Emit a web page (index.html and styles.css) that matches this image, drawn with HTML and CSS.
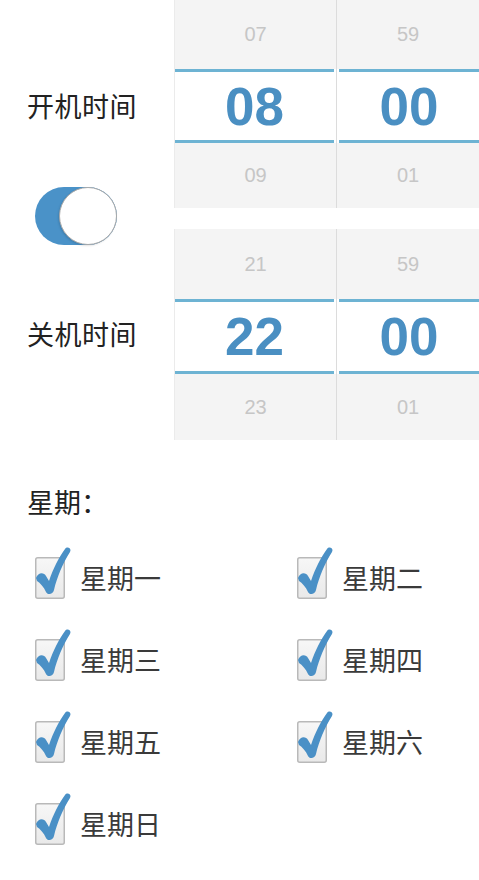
FILE: index.html
```html
<!DOCTYPE html>
<html lang="zh">
<head>
<meta charset="utf-8">
<link rel="stylesheet" href="styles.css">
</head>
<body>
<div class="page">
  <section class="timers">
    <div class="labels">
      <div class="label label-on">开机时间</div>
      <div class="toggle"><div class="knob"></div></div>
      <div class="label label-off">关机时间</div>
    </div>
    <div class="pickers">
      <div class="picker picker-on">
        <div class="col col-h">
          <div class="cell cell-top">07</div>
          <div class="cell cell-mid">08</div>
          <div class="cell cell-bot">09</div>
        </div>
        <div class="col col-m">
          <div class="cell cell-top">59</div>
          <div class="cell cell-mid">00</div>
          <div class="cell cell-bot">01</div>
        </div>
      </div>
      <div class="picker picker-off">
        <div class="col col-h">
          <div class="cell cell-top">21</div>
          <div class="cell cell-mid">22</div>
          <div class="cell cell-bot">23</div>
        </div>
        <div class="col col-m">
          <div class="cell cell-top">59</div>
          <div class="cell cell-mid">00</div>
          <div class="cell cell-bot">01</div>
        </div>
      </div>
    </div>
  </section>

  <section class="week">
    <div class="week-title">星期：</div>
    <div class="days">
      <div class="day"><svg class="cb" viewBox="0 0 36 52" width="36" height="52"><defs><linearGradient id="g1" x1="0" y1="0" x2="0" y2="1"><stop offset="0" stop-color="#f7f7f7"/><stop offset="1" stop-color="#e9e9e9"/></linearGradient></defs><rect x="0.75" y="10.75" width="28.5" height="40.5" rx="2" fill="url(#g1)" stroke="#b9b9b9" stroke-width="1.5"/><path d="M1 31 C3 25 9 25 11 29 L14 34 C18 22 24 10 30 2 C32 -1 37 1 35 5 C28 16 22 30 19 43 C18 48 12 48 11 45 C9 40 5 36 2 34 Z" fill="#4a90c6"/></svg><span>星期一</span></div>
      <div class="day"><svg class="cb" viewBox="0 0 36 52" width="36" height="52"><rect x="0.75" y="10.75" width="28.5" height="40.5" rx="2" fill="url(#g1)" stroke="#b9b9b9" stroke-width="1.5"/><path d="M1 31 C3 25 9 25 11 29 L14 34 C18 22 24 10 30 2 C32 -1 37 1 35 5 C28 16 22 30 19 43 C18 48 12 48 11 45 C9 40 5 36 2 34 Z" fill="#4a90c6"/></svg><span>星期二</span></div>
      <div class="day"><svg class="cb" viewBox="0 0 36 52" width="36" height="52"><rect x="0.75" y="10.75" width="28.5" height="40.5" rx="2" fill="url(#g1)" stroke="#b9b9b9" stroke-width="1.5"/><path d="M1 31 C3 25 9 25 11 29 L14 34 C18 22 24 10 30 2 C32 -1 37 1 35 5 C28 16 22 30 19 43 C18 48 12 48 11 45 C9 40 5 36 2 34 Z" fill="#4a90c6"/></svg><span>星期三</span></div>
      <div class="day"><svg class="cb" viewBox="0 0 36 52" width="36" height="52"><rect x="0.75" y="10.75" width="28.5" height="40.5" rx="2" fill="url(#g1)" stroke="#b9b9b9" stroke-width="1.5"/><path d="M1 31 C3 25 9 25 11 29 L14 34 C18 22 24 10 30 2 C32 -1 37 1 35 5 C28 16 22 30 19 43 C18 48 12 48 11 45 C9 40 5 36 2 34 Z" fill="#4a90c6"/></svg><span>星期四</span></div>
      <div class="day"><svg class="cb" viewBox="0 0 36 52" width="36" height="52"><rect x="0.75" y="10.75" width="28.5" height="40.5" rx="2" fill="url(#g1)" stroke="#b9b9b9" stroke-width="1.5"/><path d="M1 31 C3 25 9 25 11 29 L14 34 C18 22 24 10 30 2 C32 -1 37 1 35 5 C28 16 22 30 19 43 C18 48 12 48 11 45 C9 40 5 36 2 34 Z" fill="#4a90c6"/></svg><span>星期五</span></div>
      <div class="day"><svg class="cb" viewBox="0 0 36 52" width="36" height="52"><rect x="0.75" y="10.75" width="28.5" height="40.5" rx="2" fill="url(#g1)" stroke="#b9b9b9" stroke-width="1.5"/><path d="M1 31 C3 25 9 25 11 29 L14 34 C18 22 24 10 30 2 C32 -1 37 1 35 5 C28 16 22 30 19 43 C18 48 12 48 11 45 C9 40 5 36 2 34 Z" fill="#4a90c6"/></svg><span>星期六</span></div>
      <div class="day"><svg class="cb" viewBox="0 0 36 52" width="36" height="52"><rect x="0.75" y="10.75" width="28.5" height="40.5" rx="2" fill="url(#g1)" stroke="#b9b9b9" stroke-width="1.5"/><path d="M1 31 C3 25 9 25 11 29 L14 34 C18 22 24 10 30 2 C32 -1 37 1 35 5 C28 16 22 30 19 43 C18 48 12 48 11 45 C9 40 5 36 2 34 Z" fill="#4a90c6"/></svg><span>星期日</span></div>
    </div>
  </section>
</div>
</body>
</html>
```

FILE: styles.css
```css
html, body {
  margin: 0;
  padding: 0;
  background: #ffffff;
}

body {
  font-family: "Noto Sans CJK SC", "Noto Sans", sans-serif;
  width: 479px;
  overflow: hidden;
}

.page {
  width: 479px;
}

.timers {
  display: flex;
  height: 440px;
}

.labels {
  width: 174px;
  flex: none;
  display: flex;
  flex-direction: column;
  padding-top: 71px;
  box-sizing: border-box;
}

.label {
  padding-left: 27px;
  font-size: 27px;
  color: #222222;
  height: 69px;
  line-height: 69px;
  letter-spacing: 0.5px;
}

.label-off {
  margin-top: 54px;
  height: 70px;
  line-height: 70px;
}

.toggle {
  margin-top: 47px;
  margin-left: 35px;
  width: 82px;
  height: 58px;
  border-radius: 29px;
  background: #4a92c8;
  display: flex;
  justify-content: flex-end;
}

.knob {
  width: 58px;
  height: 58px;
  border-radius: 50%;
  box-sizing: border-box;
  background: #ffffff;
  border: 1.5px solid #a9a9a9;
  box-shadow: -1px 1px 2px rgba(0, 0, 0, 0.12);
}

.pickers {
  flex: 1;
  display: flex;
  flex-direction: column;
}

.picker {
  display: flex;
  border-left: 1px solid #ebebeb;
}

.picker-off {
  margin-top: 21px;
}

.col {
  display: flex;
  flex-direction: column;
}

.col-h {
  width: 161px;
  border-right: 1.5px solid #dcdcdc;
}

.col-m {
  flex: 1;
}

.cell {
  display: flex;
  align-items: center;
  justify-content: center;
  font-family: "Liberation Sans", Arial, sans-serif;
  background: #f4f4f4;
}

.cell-top, .cell-bot {
  font-size: 20px;
  color: #c6c6c6;
}

.cell-top {
  height: 69px;
}

.cell-bot {
  height: 65px;
}

.picker-off .cell-top {
  height: 70px;
}

.picker-off .cell-bot {
  height: 66px;
}

.cell-mid {
  background: #ffffff;
  height: 68px;
  font-size: 53px;
  font-weight: bold;
  color: #4a8fc2;
  border-top: 3px solid #6db3d3;
  border-bottom: 3px solid #6db3d3;
  box-sizing: content-box;
  margin: 0;
}

.picker-off .cell-mid {
  height: 69px;
}

.col-h .cell-mid {
  margin-right: 2px;
}

.col-m .cell-mid {
  margin-left: 2px;
}

.week {
  padding-top: 42px;
}

.week-title {
  padding-left: 27px;
  font-size: 27px;
  line-height: 40px;
  height: 40px;
  color: #222222;
}

.days {
  margin-top: 15px;
  padding-left: 35px;
  display: grid;
  grid-template-columns: 262px 182px;
  grid-auto-rows: 82px;
}

.day {
  display: flex;
  align-items: center;
}

.cb {
  flex: none;
  margin-top: -10px;
  margin-right: 9px;
}

.day span {
  font-size: 27px;
  color: #3a3a3a;
  line-height: 40px;
}
```
